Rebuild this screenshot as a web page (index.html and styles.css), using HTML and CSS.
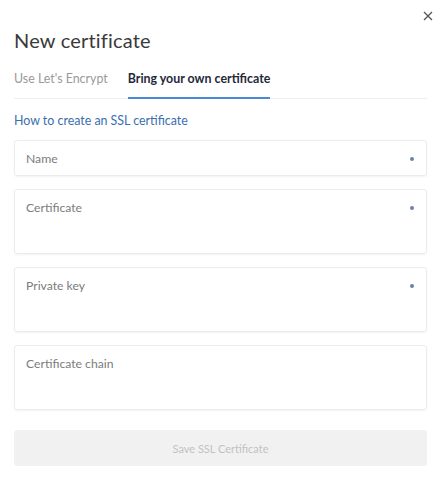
FILE: index.html
```html
<!DOCTYPE html>
<html lang="en">
<head>
    <meta charset="UTF-8">
    <meta name="viewport" content="width=device-width, initial-scale=1.0">
    <title>New certificate</title>
    <link rel="stylesheet" href="styles.css">
</head>
<body>
<div class="modal">
    <span class="close">
        <svg width="10" height="10" viewBox="0 0 10 10"><path d="M1 1L9 9M9 1L1 9" stroke="#555" stroke-width="1.3"/></svg>
    </span>
    <h1 class="title">New certificate</h1>
    <ul class="tabs">
        <li>Use Let's Encrypt</li>
        <li class="active">Bring your own certificate</li>
    </ul>
    <a class="help" href="#">How to create an SSL certificate</a>
    <div class="field">
        <span class="label">Name</span>
        <span class="req"></span>
    </div>
    <div class="field tall">
        <span class="label">Certificate</span>
        <span class="req"></span>
    </div>
    <div class="field tall">
        <span class="label">Private key</span>
        <span class="req"></span>
    </div>
    <div class="field tall">
        <span class="label">Certificate chain</span>
    </div>
    <button class="save" disabled>Save SSL Certificate</button>
</div>
</body>
</html>
```

FILE: styles.css
```css
*{
    margin: 0;
    padding: 0;
    box-sizing: border-box;
}
body{
    background: #fff;
    font-family: Lato, "Open Sans", sans-serif;
    color: #333;
}
.modal{
    position: relative;
    padding: 27px 12px 0 14px;
}
.close{
    position: absolute;
    top: 11px;
    right: 6px;
    width: 10px;
    height: 10px;
    line-height: 0;
}
.title{
    font-size: 20px;
    font-weight: 400;
    color: #3a3a3a;
    line-height: 26px;
    letter-spacing: 0.2px;
}
.tabs{
    list-style: none;
    display: flex;
    gap: 20px;
    margin-top: 17px;
    border-bottom: 1px solid #eeeeee;
}
.tabs li{
    font-size: 12.4px;
    color: #9a9a9a;
    padding-bottom: 10px;
    line-height: 17px;
}
.tabs .active{
    color: #1f2a3a;
    font-weight: 700;
    border-bottom: 2px solid #4d88d8;
    margin-bottom: -1px;
}
.help{
    display: block;
    margin-top: 13px;
    font-size: 12.4px;
    line-height: 17px;
    color: #3a6eae;
    text-decoration: none;
}
.field{
    display: flex;
    justify-content: space-between;
    height: 36px;
    margin-top: 10px;
    padding: 10px 12px 0 11px;
    border: 1px solid #ececec;
    border-radius: 3px;
    box-shadow: 0 1px 2px rgba(0,0,0,0.05);
}
.help + .field{
    margin-top: 11px;
}
.field + .field{
    margin-top: 13px;
}
.field.tall{
    height: 65px;
}
.label{
    font-size: 12.2px;
    color: #7c7c7c;
    line-height: 16px;
}
.req{
    width: 4px;
    height: 4px;
    margin-top: 6px;
    border-radius: 50%;
    background: #6c80b0;
}
.save{
    display: block;
    width: 100%;
    height: 36px;
    margin-top: 20px;
    border: none;
    border-radius: 3px;
    background: #f1f1f1;
    color: #c2c2c2;
    font-family: Lato, "Open Sans", sans-serif;
    font-size: 11px;
}
```
